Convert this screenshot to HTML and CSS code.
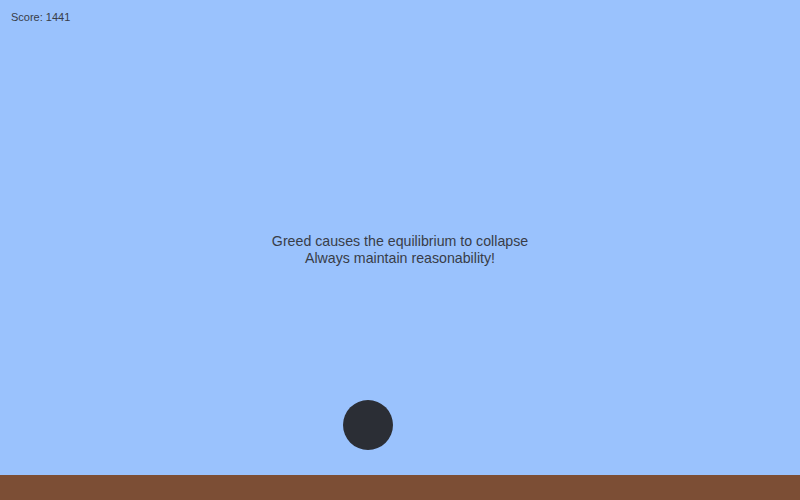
FILE: index.html
```html
<!DOCTYPE html>
<html>
<head>
<meta charset="utf-8">
<link rel="stylesheet" href="styles.css">
</head>
<body>
<div class="game">
  <div class="score">Score: 1441</div>
  <div class="stage">
    <div class="message">Greed causes the equilibrium to collapse<br>Always maintain reasonability!</div>
    <div class="ball"></div>
  </div>
  <div class="ground"></div>
</div>
</body>
</html>
```
FILE: styles.css
```css
html, body {
  margin: 0;
  padding: 0;
}
body {
  width: 800px;
  height: 500px;
  overflow: hidden;
  font-family: "Liberation Sans", Arial, sans-serif;
  color: #383d48;
}
.game {
  width: 800px;
  height: 500px;
  background: #9ac2fd;
  display: flex;
  flex-direction: column;
}
.score {
  font-size: 11px;
  line-height: 13px;
  padding: 11px 0 0 11px;
  height: 13px;
}
.stage {
  flex: 1;
  position: relative;
  display: flex;
  flex-direction: column;
  align-items: center;
}
.message {
  margin-top: 209px;
  font-size: 14.2px;
  line-height: 17px;
  text-align: center;
}
.ball {
  position: absolute;
  left: 343px;
  top: 376px;
  width: 50px;
  height: 50px;
  border-radius: 50%;
  background: #2b2e35;
}
.ground {
  height: 25px;
  background: #7c4e35;
}
```
